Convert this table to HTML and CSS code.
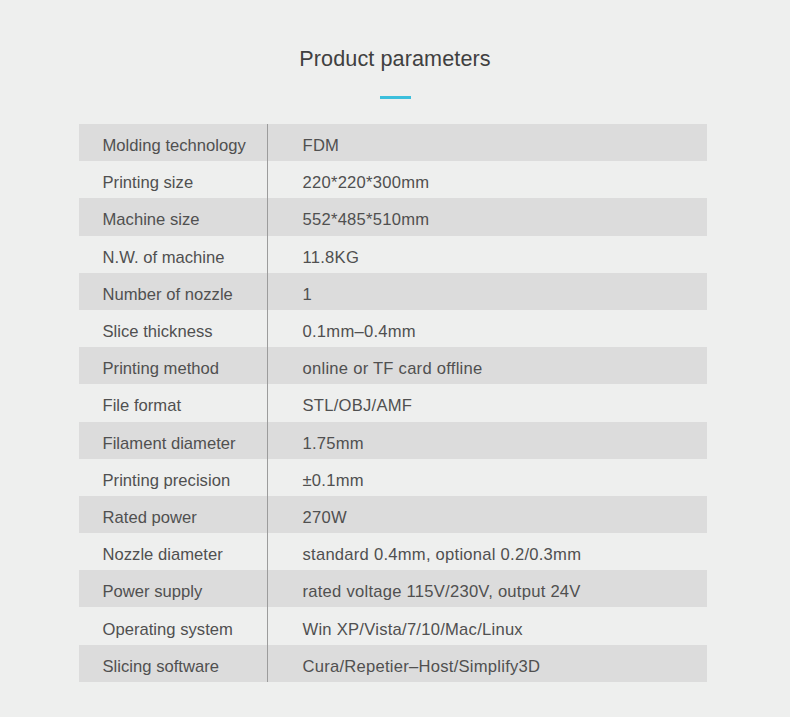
FILE: index.html
```html
<!DOCTYPE html>
<html>
<head>
<meta charset="utf-8">
<link rel="stylesheet" href="styles.css">
</head>
<body>
<section class="params">
  <h1 class="title">Product parameters</h1>
  <div class="accent"></div>
  <div class="table">
    <div class="row"><div class="label">Molding technology</div><div class="value">FDM</div></div>
    <div class="row"><div class="label">Printing size</div><div class="value">220*220*300mm</div></div>
    <div class="row"><div class="label">Machine size</div><div class="value">552*485*510mm</div></div>
    <div class="row"><div class="label">N.W. of machine</div><div class="value">11.8KG</div></div>
    <div class="row"><div class="label">Number of nozzle</div><div class="value">1</div></div>
    <div class="row"><div class="label">Slice thickness</div><div class="value">0.1mm–0.4mm</div></div>
    <div class="row"><div class="label">Printing method</div><div class="value">online or TF card offline</div></div>
    <div class="row"><div class="label">File format</div><div class="value">STL/OBJ/AMF</div></div>
    <div class="row"><div class="label">Filament diameter</div><div class="value">1.75mm</div></div>
    <div class="row"><div class="label">Printing precision</div><div class="value">±0.1mm</div></div>
    <div class="row"><div class="label">Rated power</div><div class="value">270W</div></div>
    <div class="row"><div class="label">Nozzle diameter</div><div class="value">standard 0.4mm, optional 0.2/0.3mm</div></div>
    <div class="row"><div class="label">Power supply</div><div class="value">rated voltage 115V/230V, output 24V</div></div>
    <div class="row"><div class="label">Operating system</div><div class="value">Win XP/Vista/7/10/Mac/Linux</div></div>
    <div class="row"><div class="label">Slicing software</div><div class="value">Cura/Repetier–Host/Simplify3D</div></div>
  </div>
</section>
</body>
</html>
```
FILE: styles.css
```css
html, body {
  margin: 0;
  padding: 0;
  background: #eeefee;
}
body {
  font-family: "Liberation Sans", Arial, sans-serif;
  color: #505050;
}
.params {
  width: 790px;
  height: 717px;
  display: flex;
  flex-direction: column;
  align-items: center;
  padding-top: 45px;
  box-sizing: border-box;
}
.title {
  margin: 0;
  font-size: 21.6px;
  font-weight: normal;
  line-height: 28px;
  color: #404040;
  letter-spacing: 0.1px;
}
.accent {
  width: 31px;
  height: 3px;
  background: #3cbfdc;
  margin-top: 23px;
  margin-left: 1px;
}
.table {
  width: 628px;
  margin-top: 25px;
  margin-left: -5px;
  display: flex;
  flex-direction: column;
}
.row {
  height: 37.2px;
  display: grid;
  grid-template-columns: 189px 1fr;
  font-size: 16.6px;
}
.row:nth-child(odd) {
  background: #dcdcdc;
}
.label,
.value {
  display: flex;
  align-items: center;
  padding-top: 7px;
  box-sizing: border-box;
}
.label {
  padding-left: 24px;
  letter-spacing: 0.02px;
  border-right: 1px solid #9c9c9c;
}
.value {
  padding-left: 35px;
  letter-spacing: 0.25px;
}
```
